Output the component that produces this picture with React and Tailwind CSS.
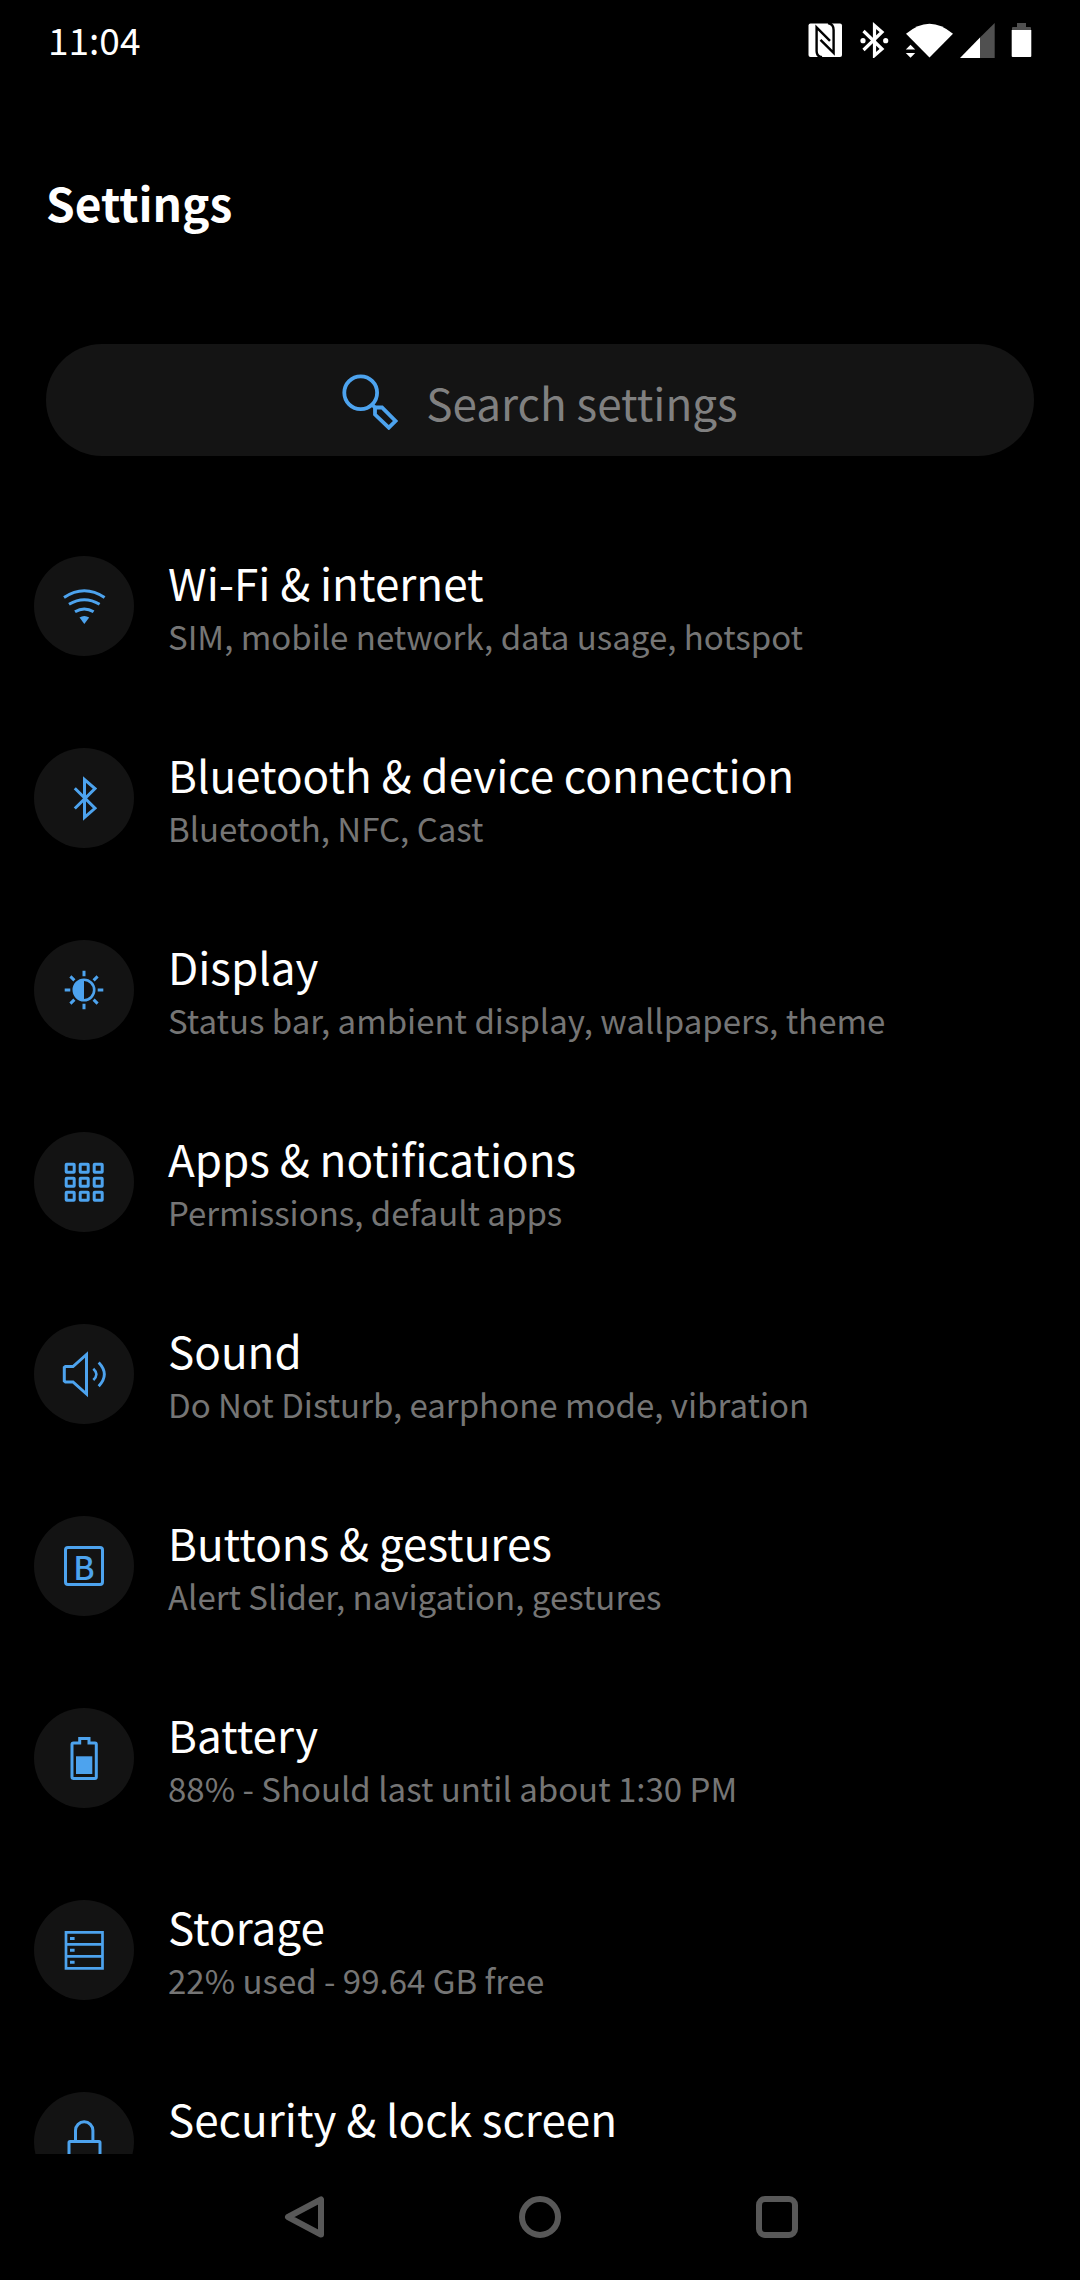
const settings = [
  {
    title: "Wi-Fi & internet",
    summary: "SIM, mobile network, data usage, hotspot",
    icon: WifiIcon,
  },
  {
    title: "Bluetooth & device connection",
    summary: "Bluetooth, NFC, Cast",
    icon: BluetoothIcon,
  },
  {
    title: "Display",
    summary: "Status bar, ambient display, wallpapers, theme",
    icon: DisplayIcon,
  },
  {
    title: "Apps & notifications",
    summary: "Permissions, default apps",
    icon: AppsIcon,
  },
  {
    title: "Sound",
    summary: "Do Not Disturb, earphone mode, vibration",
    icon: SoundIcon,
  },
  {
    title: "Buttons & gestures",
    summary: "Alert Slider, navigation, gestures",
    icon: ButtonsIcon,
  },
  {
    title: "Battery",
    summary: "88% - Should last until about 1:30 PM",
    icon: BatteryIcon,
  },
  {
    title: "Storage",
    summary: "22% used - 99.64 GB free",
    icon: StorageIcon,
  },
  {
    title: "Security & lock screen",
    icon: LockIcon,
  },
];

function LineIcon({ children }) {
  return (
    <svg
      viewBox="0 0 50 50"
      className="w-[50px] h-[50px]"
      fill="none"
      stroke="currentColor"
      strokeWidth="3"
      aria-hidden="true"
    >
      {children}
    </svg>
  );
}

function WifiIcon() {
  return (
    <LineIcon>
      <path d="M5 16.5Q25.3 3 45.6 16.5" />
      <path d="M10 23.3Q25.3 14 40.6 23.3" />
      <path d="M16 30.8Q25.3 25 34.6 30.8" />
      <path d="M20.5 36.5Q25.3 33.5 30.2 36.5L25.3 43Z" fill="currentColor" stroke="none" />
    </LineIcon>
  );
}

function BluetoothIcon() {
  return (
    <LineIcon>
      <path d="M15.8 15.3L36 35.3L25.5 44.5V6.5L36 15.5L15.8 35.5" />
    </LineIcon>
  );
}

function DisplayIcon() {
  return (
    <LineIcon>
      <circle cx="25" cy="25" r="10.2" strokeWidth="2.6" />
      <path d="M25 14.5a10.5 10.5 0 0 0 0 21z" fill="currentColor" stroke="none" />
      <path d="M25 5.7v5.6M25 38.7v5.6M5.7 25h5.6M38.7 25h5.6M11.4 11.4l4 4M34.6 34.6l4 4M38.6 11.4l-4 4M15.4 34.6l-4 4" />
    </LineIcon>
  );
}

function AppsIcon() {
  const cells = [7.2, 21.2, 35.2];

  return (
    <LineIcon>
      {cells.map((y) =>
        cells.map((x) => (
          <rect key={`${x}-${y}`} x={x} y={y} width="8" height="8" rx="0.5" />
        ))
      )}
    </LineIcon>
  );
}

function SoundIcon() {
  return (
    <LineIcon>
      <path d="M5.3 18.5L6.5 17.5H14L27.5 5.5V45L14 33H6.5L5.3 32Z" />
      <path d="M34.3 19.7Q40.5 25.3 34.3 31" strokeWidth="2.6" />
      <path d="M39.7 13.5Q51 25.3 39.7 37.3" strokeWidth="2.8" />
    </LineIcon>
  );
}

function ButtonsIcon() {
  return (
    <span className="flex items-center justify-center w-10 h-10 border-[3px] border-current rounded text-[32px] leading-[32px] font-medium">
      B
    </span>
  );
}

function BatteryIcon() {
  return (
    <LineIcon>
      <path d="M14.5 10H20.7V5.4H30V10H36Q37.3 10 37.3 11.5V44Q37.3 45.5 36 45.5H14.5Q13 45.5 13 44V11.5Q13 10 14.5 10Z" />
      <rect x="17" y="23.3" width="16.3" height="17.7" fill="currentColor" stroke="none" />
    </LineIcon>
  );
}

function StorageIcon() {
  return (
    <LineIcon>
      <path d="M7 7.3H43.5V43.3H7ZM7 19.3H43.5M7 31.3H43.5" strokeWidth="2.7" />
      <path d="M11 13.6h4.6M11 25.3h4.6M11 37.3h4.6" />
    </LineIcon>
  );
}

function LockIcon() {
  return (
    <LineIcon>
      <path d="M16.5 23.7V13.5a8.7 8.7 0 0 1 17.4 0V23.7" />
      <rect x="10" y="24.5" width="31" height="22" rx="1" />
    </LineIcon>
  );
}

function StatusBar() {
  return (
    <header className="shrink-0 flex items-center justify-between h-20 px-12">
      <span className="text-[37px] leading-[40px] pb-0.5">11:04</span>
      <div className="flex items-center gap-1.5">
        {/* NFC */}
        <svg viewBox="0 0 40 36" className="w-10 h-9" aria-hidden="true">
          <rect x="0.5" y="1.5" width="33.5" height="33.5" rx="2" fill="#fff" />
          <path
            d="M14 35.3Q8.6 34.5 8.6 29V5.5L22 18.8M20 1Q25.6 2 25.6 8V30.8L12.5 17.8"
            fill="none"
            stroke="#000"
            strokeWidth="2.4"
          />
        </svg>
        {/* Bluetooth connected */}
        <svg viewBox="0 0 40 36" className="w-10 h-9" aria-hidden="true">
          <path
            d="M9.5 9L28 27L20.5 33.5V3.5L28 10L9.5 28"
            fill="none"
            stroke="#fff"
            strokeWidth="3.2"
          />
          <circle cx="9" cy="18.7" r="2.6" fill="#fff" />
          <circle cx="31.7" cy="18.7" r="2.6" fill="#fff" />
        </svg>
        {/* Wi-Fi with traffic arrows */}
        <svg viewBox="0 0 54 36" className="w-[54px] h-9" fill="#fff" aria-hidden="true">
          <path d="M6 11.8Q29.5 -8.5 53 11.8L29.5 35.5Z" />
          <path d="M5.8 27.5L10.5 22.8L15.2 27.5ZM5.8 31L10.5 35.7L15.2 31Z" />
        </svg>
        {/* Mobile signal */}
        <svg viewBox="0 0 40 36" className="w-10 h-9" aria-hidden="true">
          <path d="M20 15.5L34.7 1V36H20Z" fill="#505050" />
          <path d="M0 36L20 15.5V36Z" fill="#fff" />
        </svg>
        {/* Battery */}
        <svg viewBox="0 0 26 36" className="w-[26px] h-9" aria-hidden="true">
          <path d="M11 1H20V5H24Q25 5 25 6V8.5H6V6Q6 5 7 5H11Z" fill="#505050" />
          <path d="M5.7 8H25.3V34Q25.3 35 24.3 35H6.7Q5.7 35 5.7 34Z" fill="#fff" />
        </svg>
      </div>
    </header>
  );
}

function SearchBar() {
  return (
    <label className="flex items-center justify-center gap-7 h-28 mx-[46px] pt-1 rounded-full bg-[#141414]">
      <svg
        viewBox="0 0 56 56"
        className="w-14 h-14 text-[#4da3ee]"
        fill="none"
        stroke="currentColor"
        strokeWidth="3.8"
        aria-hidden="true"
      >
        <circle cx="18.7" cy="18.8" r="16.4" />
        <path d="M29.8 30.3L33 33.5" />
        <path d="M33 33.5H40L53.5 47L46.8 53.7L33 40.5Z" />
      </svg>
      <input
        type="text"
        aria-label="Search settings"
        placeholder="Search settings"
        className="field-sizing-content h-16 bg-transparent text-[44px] leading-[64px] text-white placeholder:text-[#808080] outline-none"
      />
    </label>
  );
}

function SettingRow({ title, summary, icon: Icon }) {
  return (
    <li>
      <button
        type="button"
        className="flex items-center gap-[34px] w-full h-48 px-[34px] text-left"
      >
        <span className="shrink-0 flex items-center justify-center w-[100px] h-[100px] rounded-full bg-[#131313] text-[#4da3ee]">
          <Icon />
        </span>
        <span className="flex flex-col h-[108px]">
          <span className="text-[44px] leading-[60px]">{title}</span>
          {summary && (
            <span className="text-[33px] leading-[48px] text-[#757575]">{summary}</span>
          )}
        </span>
      </button>
    </li>
  );
}

function NavigationBar() {
  return (
    <nav className="shrink-0 flex items-center justify-center gap-[195px] h-[126px] text-[#585858]">
      <button type="button" aria-label="Back">
        <svg
          viewBox="0 0 42 42"
          className="w-[42px] h-[42px]"
          fill="none"
          stroke="currentColor"
          strokeWidth="6"
          strokeLinejoin="round"
        >
          <path d="M39 3.5V38.5L6 21Z" />
        </svg>
      </button>
      <button type="button" aria-label="Home">
        <svg
          viewBox="0 0 42 42"
          className="w-[42px] h-[42px]"
          fill="none"
          stroke="currentColor"
          strokeWidth="6"
        >
          <circle cx="21" cy="21" r="18" />
        </svg>
      </button>
      <button type="button" aria-label="Recent apps">
        <svg
          viewBox="0 0 42 42"
          className="w-[42px] h-[42px]"
          fill="none"
          stroke="currentColor"
          strokeWidth="6"
        >
          <rect x="3" y="3" width="36" height="36" rx="6" />
        </svg>
      </button>
    </nav>
  );
}

export default function App() {
  return (
    <div className="flex flex-col h-screen bg-black text-white font-['Noto_Sans_CJK_SC',sans-serif]">
      <StatusBar />
      <main className="flex-1 min-h-0 overflow-hidden">
        <h1 className="pt-[90px] pb-[110px] px-[46px] text-[46px] leading-[64px] font-bold">
          Settings
        </h1>
        <SearchBar />
        <ul className="mt-[54px]">
          {settings.map((item) => (
            <SettingRow key={item.title} {...item} />
          ))}
        </ul>
      </main>
      <NavigationBar />
    </div>
  );
}
